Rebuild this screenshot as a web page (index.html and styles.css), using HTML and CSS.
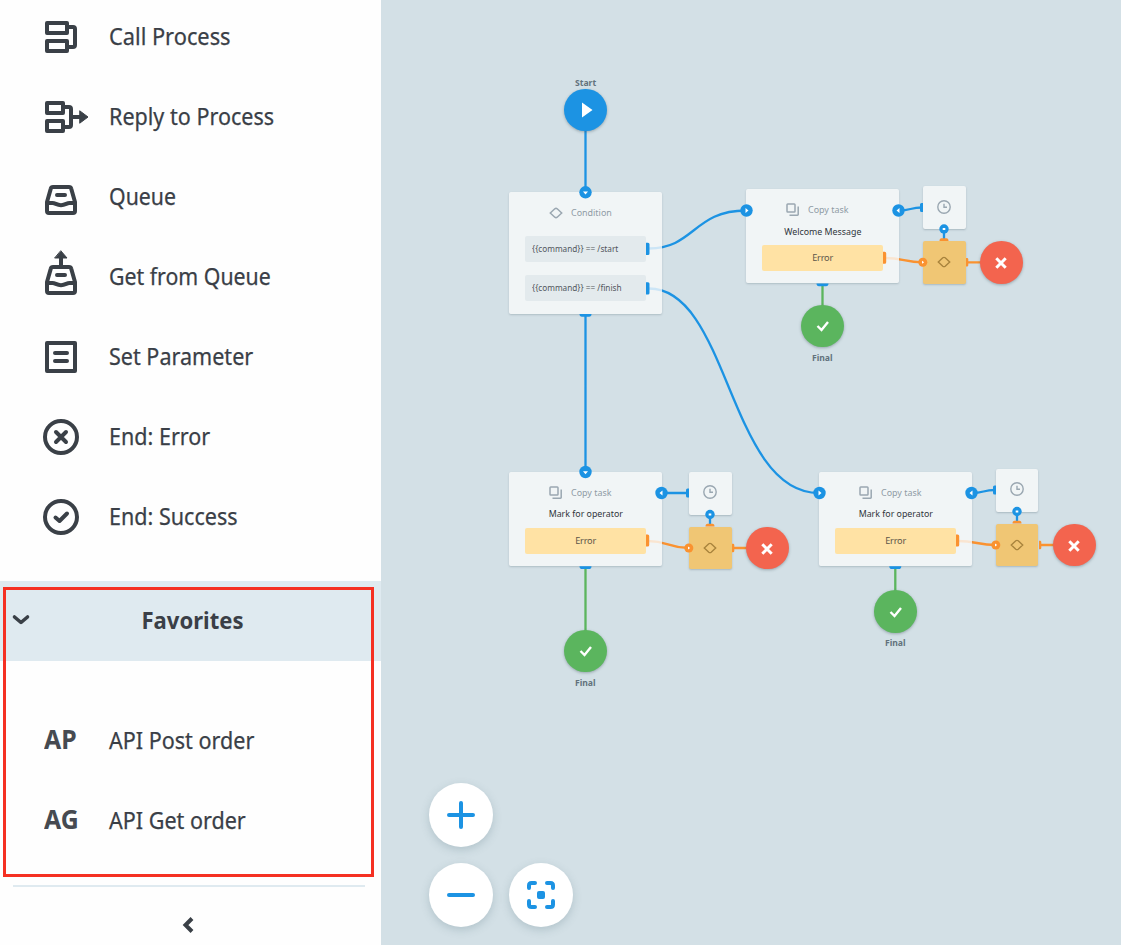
FILE: index.html
```html
<!DOCTYPE html>
<html lang="en">
<head>
<meta charset="utf-8">
<title>Process editor</title>
<link rel="stylesheet" href="styles.css">
</head>
<body>
<svg class="defs" aria-hidden="true">
  <defs>
    <symbol id="tray" viewBox="0 0 60 60"><path d="M7 35 10.800 21.600Q11.200 20 13 20H29Q30.800 20 31.200 21.600L35 35V44q0 2-2 2H9q-2 0-2-2zM7 36h5.500c3 0 4 2.200 8.500 2.200s5.500-2.200 8.500-2.200H35M17 28h8"/></symbol>
    <symbol id="copy" viewBox="0 0 14 14"><path d="M1.800 1h6.400q.8 0 .8.800v6.400q0 .8-.8.800H1.800q-.8 0-.8-.8V1.800q0-.8.800-.8zM12.200 3.500v8q0 .7-.7.700h-8"/></symbol>
    <symbol id="clock" viewBox="0 0 14 14"><circle cx="7" cy="7" r="6.200"/><path d="M7 3.700V7.200h3"/></symbol>
    <symbol id="diamond" viewBox="0 0 14 14"><path d="M1.300 7 5.800 2.800Q7 1.900 8.200 2.800L12.700 7 8.200 11.200Q7 12.100 5.800 11.200z"/></symbol>
    <symbol id="check" viewBox="0 0 14 14"><path d="M1.500 7 5.500 11 12 3"/></symbol>
    <symbol id="cross" viewBox="0 0 14 14"><path d="M2.300 2.300l9.400 9.400M11.700 2.300l-9.400 9.400"/></symbol>
  </defs>
</svg>
<div class="app">
  <aside class="sidebar">
    <ul class="tools">
      <li class="row"><svg class="icon" viewBox="0 0 60 60"><rect x="7" y="16" width="20" height="10"/><rect x="7" y="34" width="20" height="10"/><path d="M28 20h5q2 0 2 2v16q0 2-2 2h-5"/></svg><span class="label wide">Call Process</span></li>
      <li class="row"><svg class="icon" viewBox="0 0 60 60"><rect x="7" y="16" width="16" height="10"/><rect x="7" y="34" width="16" height="10"/><path d="M24 20h5q2 0 2 2v16q0 2-2 2h-5M31 30h9"/><path class="head" d="M40 24l8 6-8 6z"/></svg><span class="label">Reply to Process</span></li>
      <li class="row"><svg class="icon"><use href="#tray"/></svg><span class="label tight">Queue</span></li>
      <li class="row"><svg class="icon" viewBox="0 0 60 60"><use href="#tray"/><path d="M21 19v-9"/><path class="head" d="M21 4l6 7H15z"/></svg><span class="label tight">Get from Queue</span></li>
      <li class="row"><svg class="icon" viewBox="0 0 60 60"><rect x="7" y="16" width="28" height="28"/><path d="M15 26h12M15 34h12"/></svg><span class="label">Set Parameter</span></li>
      <li class="row"><svg class="icon" viewBox="0 0 60 60"><circle cx="21" cy="30" r="16"/><path d="M16 25l10 10M26 25L16 35"/></svg><span class="label">End: Error</span></li>
      <li class="row"><svg class="icon" viewBox="0 0 60 60"><circle cx="21" cy="30" r="16"/><path d="M15.500 30.500l4 3.500 7.500-7.500"/></svg><span class="label">End: Success</span></li>
    </ul>
    <section class="favorites">
      <header class="fav-head">
        <svg class="chevron" viewBox="0 0 20 14"><path d="M3.500 4l6.500 5.500L16.500 4"/></svg>
        <h2>Favorites</h2>
      </header>
      <ul class="fav-list">
        <li class="row"><b class="initials">AP</b><span class="label">API Post order</span></li>
        <li class="row"><b class="initials">AG</b><span class="label">API Get order</span></li>
      </ul>
      <div class="highlight"></div>
    </section>
    <footer class="collapse"><svg class="back" viewBox="0 0 12 18"><path d="M10 2.500L3.500 9l6.500 6.500"/></svg></footer>
  </aside>

  <main class="canvas">
    <svg class="edges" viewBox="381 0 740 945">
      <g class="blue">
        <path d="M585.500 130V192M585.500 314V472M649 248.500C694 248.500 694 210.500 746 210.500M649 288.500C729 288.500 729 493 819 493"/>
        <path d="M899 210.500C911 210.500 910 207.500 922 207.500M661.500 493H688M972 493C984 493 983 490 995 490"/>
        <path d="M944 229V240M710 514.500V526M1017 511.500V523"/>
      </g>
      <g class="orange">
        <path d="M885 258C903 258 905 262.300 923 262.300H922M966 262.300H982M648 541C668 541 668 548 689 548M732 548H748M958 541C976 541 978 545 996 545M1039 545H1055"/>
      </g>
      <g class="green"><path d="M822.500 284V306M585.500 567V631M895.300 567V591"/></g>
    </svg>

    <div class="start-node"><span class="caption">Start</span><i class="disc start"><svg viewBox="0 0 14 14"><path d="M3 -.5l10.500 7.500L3 14.500z"/></svg></i></div>

    <article class="card condition">
      <header><svg><use href="#diamond"/></svg><span>Condition</span></header>
      <p class="rule"><span>{{command}} == /start</span></p>
      <p class="rule"><span>{{command}} == /finish</span></p>
    </article>

    <article class="card welcome">
      <header><svg><use href="#copy"/></svg><span>Copy task</span></header>
      <h3>Welcome Message</h3><p class="error">Error</p>
    </article>
    <article class="card mark-a">
      <header><svg><use href="#copy"/></svg><span>Copy task</span></header>
      <h3>Mark for operator</h3><p class="error">Error</p>
    </article>
    <article class="card mark-b">
      <header><svg><use href="#copy"/></svg><span>Copy task</span></header>
      <h3>Mark for operator</h3><p class="error">Error</p>
    </article>

    <div class="branch branch-w">
      <i class="tile timer"><svg><use href="#clock"/></svg></i>
      <i class="tile fork"><svg><use href="#diamond"/></svg></i>
      <i class="disc fail"><svg><use href="#cross"/></svg></i>
    </div>
    <div class="branch branch-a">
      <i class="tile timer"><svg><use href="#clock"/></svg></i>
      <i class="tile fork"><svg><use href="#diamond"/></svg></i>
      <i class="disc fail"><svg><use href="#cross"/></svg></i>
    </div>
    <div class="branch branch-b">
      <i class="tile timer"><svg><use href="#clock"/></svg></i>
      <i class="tile fork"><svg><use href="#diamond"/></svg></i>
      <i class="disc fail"><svg><use href="#cross"/></svg></i>
    </div>

    <div class="final-node final-w"><i class="disc done"><svg><use href="#check"/></svg></i><span class="caption">Final</span></div>
    <div class="final-node final-a"><i class="disc done"><svg><use href="#check"/></svg></i><span class="caption">Final</span></div>
    <div class="final-node final-b"><i class="disc done"><svg><use href="#check"/></svg></i><span class="caption">Final</span></div>

    <svg class="ports" viewBox="381 0 740 945">
      <g class="p-blue">
        <circle cx="585.500" cy="192.300" r="6.200"/><circle cx="585.500" cy="472" r="6.200"/>
        <circle cx="746.500" cy="210.500" r="6.200"/><circle cx="819.500" cy="493" r="6.200"/>
        <circle cx="898.500" cy="210.500" r="6.200"/><circle cx="661.500" cy="493" r="6.200"/><circle cx="971.500" cy="493" r="6.200"/>
        <circle cx="944" cy="229" r="4.700"/><circle cx="710" cy="514.500" r="4.700"/><circle cx="1017" cy="511.500" r="4.700"/>
        <path d="M646 242.700h2q1.500 0 1.500 1.500v9.300q0 1.500-1.500 1.500h-2zM646 282.300h2q1.500 0 1.500 1.500v9.300q0 1.500-1.500 1.500h-2z"/>
        <path d="M579.500 314h12q0 2.800-2.500 2.800h-7q-2.500 0-2.500-2.800zM579.500 566.300h12q0 2.800-2.500 2.800h-7q-2.500 0-2.500-2.800zM816.500 283.500h12q0 2.800-2.500 2.800h-7q-2.500 0-2.500-2.800zM889.300 566.300h12q0 2.800-2.500 2.800h-7q-2.500 0-2.500-2.800z"/>
        <path d="M923 203v9h-1.500q-1.500 0-1.500-1.500v-6q0-1.500 1.500-1.500zM689 488.500v9h-1.500q-1.500 0-1.500-1.500v-6q0-1.500 1.500-1.500zM996 485.500v9h-1.500q-1.500 0-1.500-1.500v-6q0-1.500 1.500-1.500z"/>
      </g>
      <g class="p-orange">
        <circle cx="922.800" cy="262.300" r="4.500"/><circle cx="688.800" cy="548" r="4.500"/><circle cx="995.800" cy="545" r="4.500"/>
        <path d="M883 251.800h1.700q1.500 0 1.500 1.500v9q0 1.500-1.500 1.500H883zM646 534.500h1.700q1.500 0 1.500 1.500v9q0 1.500-1.500 1.500H646zM956 534.500h1.700q1.500 0 1.500 1.500v9q0 1.500-1.500 1.500H956z"/>
        <path d="M966 258h1q1.300 0 1.300 1.300v6q0 1.300-1.300 1.300h-1zM732 543.700h1q1.300 0 1.300 1.300v6q0 1.300-1.300 1.300h-1zM1039 540.700h1q1.300 0 1.300 1.300v6q0 1.300-1.300 1.300h-1z"/>
        <path d="M939.500 241q0-2.800 2-2.800h5q2 0 2 2.800zM705.500 526.500q0-2.800 2-2.800h5q2 0 2 2.800zM1012.500 523.500q0-2.800 2-2.800h5q2 0 2 2.800z"/>
      </g>
      <g class="p-mark">
        <path d="M583 191.500h5l-2.500 3zM583 471.200h5l-2.500 3zM745.500 208v5l3-2.500zM818.500 490.500v5l3-2.500zM899.500 208v5l-3-2.500zM662.500 490.500v5l-3-2.500zM972.500 490.500v5l-3-2.500z"/>
        <path d="M942.700 228h2.600v2h-2.600zM708.700 513.500h2.600v2h-2.600zM1015.700 510.500h2.600v2h-2.600zM922 260.800v3l2.200-1.500zM688 546.500v3l2.200-1.500zM995 543.500v3l2.200-1.500z"/>
      </g>
    </svg>

    <div class="zoom-bar">
      <button class="round plus"><svg viewBox="0 0 32 32"><path d="M4 16h24M16 4v24"/></svg></button>
      <button class="round minus"><svg viewBox="0 0 32 32"><path d="M4 16h24"/></svg></button>
      <button class="round fit"><svg viewBox="0 0 32 32"><path d="M4 9V6.500q0-2.500 2.500-2.500H10M22 4h3.500q2.500 0 2.500 2.500V9M28 22v3.500q0 2.500-2.500 2.500H22M10 28H6.500q-2.500 0-2.500-2.500V22"/><rect x="12" y="12" width="8" height="8" rx="2"/></svg></button>
    </div>
  </main>
</div>
</body>
</html>
```
FILE: styles.css
```css
* { box-sizing: border-box; }
body { margin: 0; overflow: hidden; font-family: "Noto Sans", "Open Sans", sans-serif; color: #3a3f47; }
ul, p, h2, h3 { margin: 0; padding: 0; list-style: none; }
.defs { position: absolute; width: 0; height: 0; }
.app { display: flex; width: 1121px; height: 945px; }

/* Sidebar */
.sidebar { width: 381px; flex: none; background: #fefefe; overflow: hidden; }
.tools { margin-top: -3px; padding-bottom: 24px; }
.row { display: flex; align-items: center; height: 80px; padding-left: 40px; gap: 9px; }
.icon { width: 60px; height: 60px; fill: none; stroke: #3a4047; stroke-width: 4; stroke-linecap: round; stroke-linejoin: round; overflow: visible; }
.head { fill: #3a4047; stroke-width: 1; }
.label { font-size: 23px; line-height: 32px; padding-bottom: 2px; white-space: nowrap; transform: scaleX(.937); transform-origin: left; -webkit-text-stroke: .25px #3a3f47; }
.label.wide { transform: scaleX(.948); }
.label.tight { transform: scaleX(.926); }
.favorites { position: relative; }
.fav-head { display: flex; align-items: center; height: 80px; background: #dfeaf0; padding-left: 11px; }
.chevron { width: 20px; height: 14px; fill: none; stroke: #3a4047; stroke-width: 3.600; stroke-linecap: round; stroke-linejoin: round; margin-top: -3px; }
.fav-head h2 { width: 323px; text-align: center; font-size: 24px; line-height: 32px; padding-bottom: 3px; font-weight: 700; transform: scaleX(.92); }
.fav-list { padding-top: 40px; height: 224px; }
.initials { width: 60px; padding: 0 0 4px 4px; font-size: 27px; line-height: 36px; color: #464a51; transform: scaleX(.92); transform-origin: 4px 50%; }
.highlight { position: absolute; left: 3px; top: 6px; width: 371px; height: 290px; border: 3px solid #f53022; }
.collapse { display: flex; justify-content: center; align-items: center; margin: 0 16px 0 13px; padding: 0 3px 3px 0; height: 80px; border-top: 2px solid #dfeaf0; }
.back { width: 12px; height: 18px; fill: none; stroke: #3a4047; stroke-width: 4; }

/* Canvas: nodes sit at free positions */
.canvas { position: relative; flex: 1; background: #d3e0e6; }
.edges, .ports { position: absolute; left: 0; top: 0; width: 740px; height: 945px; }
.edges { fill: none; stroke-width: 2.3; }
.blue { stroke: #1c93e3; }
.orange { stroke: #fa9230; }
.green { stroke: #5bb55e; }
.p-blue { fill: #1c93e3; }
.p-orange { fill: #fa9230; }
.p-mark { fill: #fff; }

.card { position: absolute; width: 152.600px; height: 94.300px; padding: 11px 15.500px 0; border-radius: 2px; background: rgba(249, 250, 250, .8); box-shadow: 0 1px 2px rgba(90, 110, 120, .3); text-align: center; font-size: 9px; line-height: 14px; }
.card header { display: flex; align-items: center; gap: 8px; height: 19px; padding-left: 24px; color: #8f9ba5; font-size: 9.500px; }
.card header span { transform: scaleX(.94); transform-origin: left; white-space: nowrap; }
.card header svg { width: 14px; height: 14px; fill: none; stroke: #9aa7b1; stroke-width: 1.500; }
.card h3 { margin-top: 5px; height: 14px; font-weight: 400; font-size: 9.500px; white-space: nowrap; color: #30353b; transform: scaleX(.93); }
.welcome h3 { padding-top: 1px; }
.error { margin-top: 6.500px; height: 26.200px; line-height: 25px; border-radius: 2px; background: #ffe2a4; color: #5d564a; font-size: 9.200px; }
.error { letter-spacing: -.2px; }
.rule { height: 26.200px; line-height: 26px; padding-left: 7px; border-radius: 2px; background: #e3eaed; text-align: left; color: #52575d; font-size: 9px; white-space: nowrap; }
.rule span { display: inline-block; transform: scaleX(.915); transform-origin: left; }
.rule + .rule { margin-top: 13px; }
.condition { left: 128.300px; top: 192px; height: 122px; }
.condition header { margin-bottom: 13.700px; }
.welcome { left: 365.300px; top: 189px; }
.mark-a { left: 128.300px; top: 472px; }
.mark-b { left: 438.300px; top: 472px; }

.branch { position: absolute; display: grid; grid-template-columns: 42.700px 42.700px; column-gap: 14.800px; row-gap: 12px; }
.branch-w { left: 542px; top: 186.300px; }
.branch-a { left: 307.900px; top: 472px; }
.branch-b { left: 614.700px; top: 469px; }
.tile, .disc { display: flex; align-items: center; justify-content: center; width: 42.700px; height: 42.700px; box-shadow: 0 1px 2px rgba(90, 110, 120, .35); }
.tile { border-radius: 2px; background: #f1f5f6; }
.tile svg { width: 14px; height: 14px; fill: none; stroke: #9aa7b1; stroke-width: 1.400; margin: -2px 1px 0 0; }
.fork { grid-row: 2; background: #f0c674; }
.fork svg { stroke: #a8833c; margin: 0 1px 0 0; }
.disc { border-radius: 50%; box-shadow: 0 1px 3px rgba(60, 80, 90, .4); }
.disc svg { width: 14px; height: 14px; fill: none; stroke: #fff; stroke-width: 2.400; overflow: visible; }
.fail { grid-row: 2; background: #f3644e; }
.fail svg { stroke-width: 3; margin: 1px 1px 0 0; }
.start { background: #1c93e3; }
.start svg { fill: #fff; stroke: none; margin-left: 1px; }
.done { background: #5bb55e; }
.done svg { margin-left: 1px; }
.start-node, .final-node { position: absolute; display: flex; flex-direction: column; align-items: center; width: 42.700px; }
.start-node { left: 183.100px; top: 75.700px; }
.final-w { left: 420px; top: 304.700px; }
.final-a { left: 183.100px; top: 629.700px; }
.final-b { left: 493px; top: 590.300px; }
.caption { font-size: 9.400px; line-height: 13px; font-weight: 700; color: #62727c; transform: scaleX(.92); }
.final-node .caption { margin-top: 3.300px; }

.zoom-bar { position: absolute; left: 48px; top: 783px; display: grid; grid-template-columns: 64px 64px; gap: 16px; }
.round { display: flex; align-items: center; justify-content: center; width: 64px; height: 64px; padding: 0; border: 0; border-radius: 50%; background: #fff; box-shadow: 0 3px 8px rgba(80, 110, 125, .25); }
.minus, .fit { grid-row: 2; }
.round svg { width: 32px; height: 32px; fill: none; stroke: #1c93e3; stroke-width: 4; stroke-linecap: round; }
.round rect { fill: #1c93e3; stroke: none; }
```
